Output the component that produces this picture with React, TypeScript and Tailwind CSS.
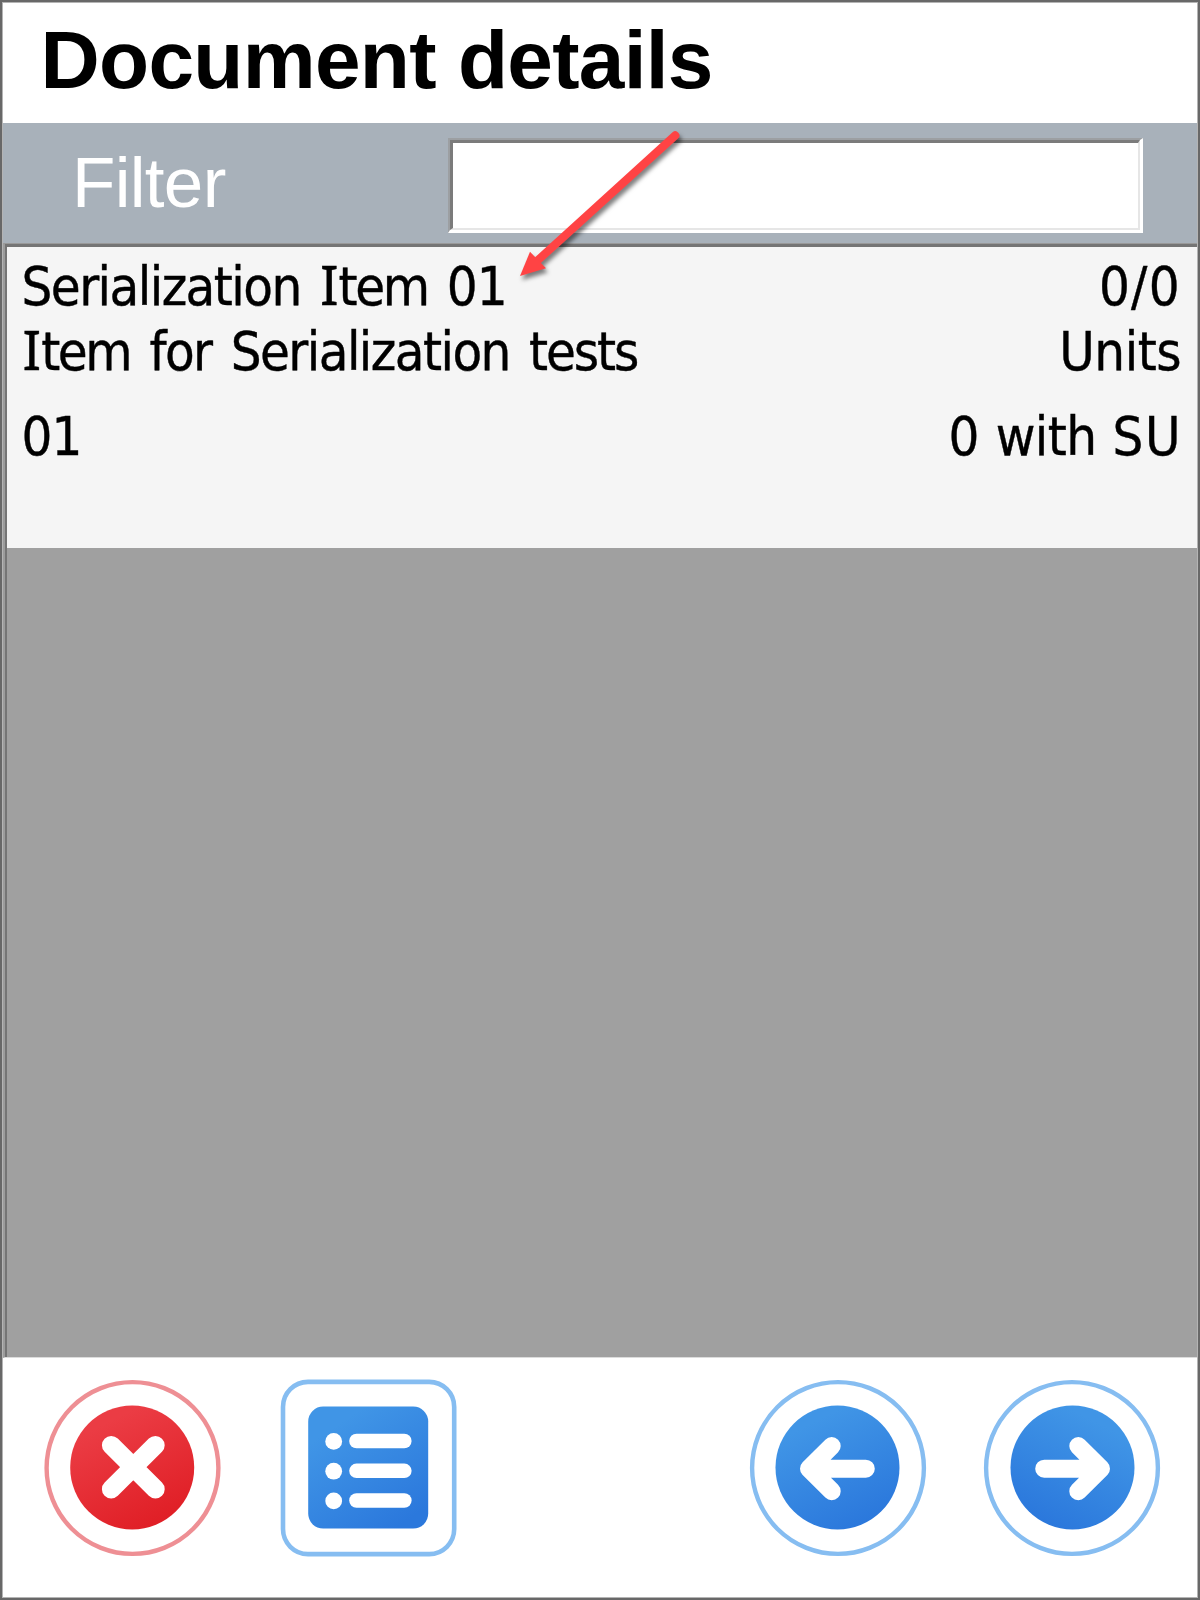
import React from "react";

const sans = "font-['Liberation_Sans',Arial,sans-serif]";

function CapI() {
  return <span className="font-['Noto_Sans',sans-serif] text-[55px] leading-none">I</span>;
}

function Item() {
  return (
    <span>
      <CapI />
      <span className="tracking-[-2.4px]">tem</span>
    </span>
  );
}

function Serialization() {
  return <span className="tracking-[-1.55px]">Serialization</span>;
}

function CancelIcon() {
  return (
    <svg className="h-[180px] w-[180px]" viewBox="0 0 180 180" fill="none">
      <defs>
        <linearGradient id="red" x1="0.25" y1="0.05" x2="0.7" y2="0.95">
          <stop offset="0.1" stopColor="#eb3c44" />
          <stop offset="1" stopColor="#e01f26" />
        </linearGradient>
      </defs>
      <circle cx="90.5" cy="90" r="85.9" stroke="#ee8f94" strokeWidth="4.4" />
      <circle cx="90.2" cy="89.5" r="62" fill="url(#red)" />
      <path d="M69.2 67.2L113.4 111.2M113.4 67.2L69.2 111.2" stroke="#fff" strokeWidth="18.6" strokeLinecap="round" />
    </svg>
  );
}

function ListIcon() {
  return (
    <svg className="h-[180px] w-[180px]" viewBox="0 0 180 180" fill="none">
      <defs>
        <linearGradient id="blueSquare" x1="0.2" y1="0.05" x2="0.8" y2="0.95">
          <stop offset="0.1" stopColor="#4095e6" />
          <stop offset="1" stopColor="#2b78dc" />
        </linearGradient>
      </defs>
      <rect x="4" y="3.9" width="171.2" height="172.2" rx="25" stroke="#86bdf1" strokeWidth="4.6" />
      <rect x="29.2" y="28.6" width="120" height="122" rx="15" fill="url(#blueSquare)" />
      {[63, 92.8, 122.5].map((y) => (
        <g key={y} fill="#fff">
          <circle cx="54.7" cy={y + 0.4} r="8.4" />
          <rect x="70.2" y={y - 7.3} width="62.4" height="14.6" rx="7.3" />
        </g>
      ))}
    </svg>
  );
}

function ArrowIcon({ flip = false }: { flip?: boolean }) {
  const id = flip ? "blueRight" : "blueLeft";
  return (
    <svg className={flip ? "h-[180px] w-[180px] -scale-x-100" : "h-[180px] w-[180px]"} viewBox="0 0 180 180" fill="none">
      <defs>
        <linearGradient id={id} x1="0.25" y1="0.05" x2="0.7" y2="0.95">
          <stop offset="0.1" stopColor="#4095e6" />
          <stop offset="1" stopColor="#2b78dc" />
        </linearGradient>
      </defs>
      <circle cx="90" cy="90" r="85.9" stroke="#86bdf1" strokeWidth="4.4" />
      <circle cx="89.5" cy="89.5" r="62" fill={`url(#${id})`} />
      <path
        d="M83.7 68L61 90.7L83.7 113.2M61 90.7H117.8"
        stroke="#fff"
        strokeWidth="18"
        strokeLinecap="round"
        strokeLinejoin="round"
      />
    </svg>
  );
}

function Pointer() {
  return (
    <svg
      className="pointer-events-none absolute top-[118px] left-[508px] h-[180px] w-[190px] drop-shadow-[2px_4px_2px_rgba(0,0,0,0.5)]"
      viewBox="510 120 190 180"
    >
      <path d="M675.3 135.4L537 261" stroke="#ff4344" strokeWidth="8.2" strokeLinecap="round" />
      <path d="M520 276L530 251.7L546 268.3Z" fill="#ff4344" />
    </svg>
  );
}

export default function App() {
  return (
    <div className="relative h-[1600px] w-[1200px] overflow-hidden border-2 border-[#686868] bg-white text-black">
      <div className="flex h-full flex-col border border-[#b4b4b4]">
        <header className={`${sans} h-[120px] shrink-0 pl-[37.5px] text-[82px] leading-[113px] font-bold tracking-[-0.7px] whitespace-nowrap`}>
          Document details
        </header>

        <div className="flex h-[120px] shrink-0 items-start bg-[#a8b1ba] pt-[15px]">
          <label className={`${sans} w-[445px] pt-[3px] pl-[69px] text-[71px] leading-[84px] tracking-[-0.7px] text-white`}>Filter</label>
          <div className="h-[95px] w-[695px] border-t-2 border-r-3 border-b-3 border-l-2 border-t-[#9c9fa2] border-r-white border-b-white border-l-[#9c9fa2]">
            <div className="h-full border-t-3 border-r-2 border-b-2 border-l-3 border-t-[#7b7b7b] border-r-[#e6e6e6] border-b-[#e6e6e6] border-l-[#7b7b7b] bg-white" />
          </div>
        </div>

        <main className="flex h-[1115px] shrink-0 flex-col border-t border-b border-l-2 border-t-[#999] border-b-[#dcdcdc] border-l-[#9c9c9c]">
          <div className="flex flex-1 flex-col border-t-3 border-l-2 border-[#757575] bg-[#a0a0a0]">
            <div className="flex h-[301px] justify-between bg-[#f5f5f5] pt-[8px] pl-[14.5px] font-['DejaVu_Sans_Condensed','DejaVu_Sans',sans-serif] text-[54px] leading-[64px] whitespace-nowrap [-webkit-text-stroke:0.4px_black]">
              <div className="[word-spacing:3.8px]">
                <div>
                  <Serialization /> <Item /> <span className="tracking-[-1px]">01</span>
                </div>
                <div className="mt-px pl-px">
                  <Item /> <span className="tracking-[-1.6px]">for</span> <Serialization />{" "}
                  <span className="tracking-[-2.1px]">tests</span>
                </div>
                <div className="mt-[21px] tracking-[-1px]">01</div>
              </div>
              <div className="pr-[16px] text-right">
                <div className="tracking-[1.3px]">0/0</div>
                <div className="mt-px tracking-[-0.5px]">Units</div>
                <div className="mt-[21px] -mr-px [word-spacing:0.8px]">
                  0 <span className="tracking-[-0.6px]">with</span> <span className="tracking-[1.5px]">SU</span>
                </div>
              </div>
            </div>
          </div>
        </main>

        <footer className="flex flex-1 items-start justify-between pt-5 pr-[35px] pl-[39px]">
          <div className="flex gap-[57px]">
            <button aria-label="Cancel"><CancelIcon /></button>
            <button aria-label="List"><ListIcon /></button>
          </div>
          <div className="flex gap-[54px]">
            <button aria-label="Previous"><ArrowIcon /></button>
            <button aria-label="Next"><ArrowIcon flip /></button>
          </div>
        </footer>
      </div>
      <Pointer />
    </div>
  );
}
